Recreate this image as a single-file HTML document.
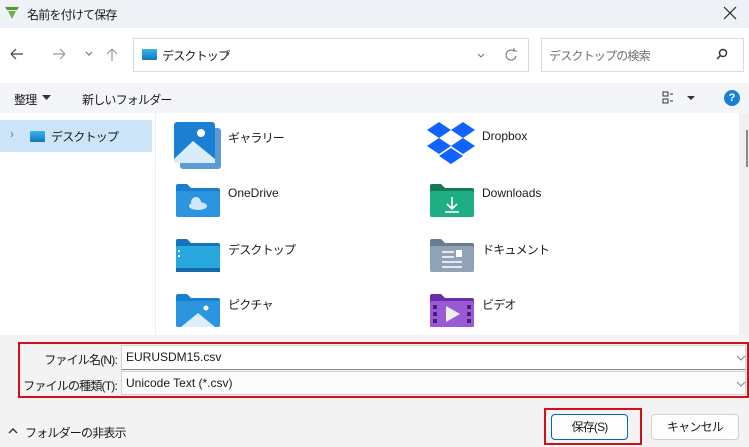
<!DOCTYPE html><html><head><meta charset="utf-8"><style>
*{box-sizing:border-box;margin:0;padding:0}
body{width:749px;height:447px;overflow:hidden;background:#fff;font-family:"Liberation Sans","Noto Sans CJK JP",sans-serif;font-size:12px;color:#1a1a1a;position:relative}
.a{position:absolute}
.t{position:absolute;white-space:nowrap}
.j{letter-spacing:-0.8px}
</style></head><body>
<div class="a" style="left:0;top:0;width:749px;height:28px;background:#eef1f6"></div>
<svg class="a" style="left:4px;top:5px" width="16" height="16"><path d="M1 2h14l-2 3H3z" fill="#4c9a2a"/><path d="M4 6h8l-4 8z" fill="#6ab04c"/></svg>
<div class="t j" style="left:27px;top:6px;font-size:12px">名前を付けて保存</div>
<svg class="a" style="left:723px;top:6px" width="14" height="14"><path d="M1 1L13 13M13 1L1 13" stroke="#222" stroke-width="1.2"/></svg>
<svg class="a" style="left:8px;top:46px" width="110" height="16" fill="none" stroke-width="1.2"><path d="M3 8h12M3 8l5-5M3 8l5 5" stroke="#444"/><path d="M45 8h12M57 8l-5-5M57 8l-5 5" stroke="#999"/><path d="M78 6l3 3 3-3" stroke="#777"/><path d="M104 3v12M104 3l-5 5M104 3l5 5" stroke="#999"/></svg>
<div class="a" style="left:133px;top:38px;width:396px;height:34px;border:1px solid #dcdcdc;background:#fff"></div>
<div class="a" style="left:142px;top:49px;width:15px;height:11px;background:linear-gradient(#3bb4e8,#0e78c2);border-radius:1px"></div>
<div class="t j" style="left:162px;top:47px">デスクトップ</div>
<div class="t" style="left:226px;top:46px;color:#555">›</div>
<svg class="a" style="left:470px;top:47px" width="50" height="16" fill="none" stroke="#777" stroke-width="1.1"><path d="M8 7l3 3 3-3"/><path d="M44 4a5 5 0 1 0 2 5M44 1v3h3"/></svg>
<div class="a" style="left:541px;top:38px;width:203px;height:34px;border:1px solid #dcdcdc;background:#fff"></div>
<div class="t j" style="left:549px;top:47px;color:#6e6e6e">デスクトップの検索</div>
<svg class="a" style="left:715px;top:48px" width="14" height="14" fill="none" stroke="#333" stroke-width="1.5"><circle cx="8" cy="5" r="3.5"/><path d="M5.5 7.5L2 11"/></svg>
<div class="a" style="left:0;top:83px;width:749px;height:30px;background:#f3f5f9"></div>
<div class="t j" style="left:14px;top:91px">整理</div>
<svg class="a" style="left:42px;top:95px" width="9" height="6"><path d="M0 0h9L4.5 5z" fill="#333"/></svg>
<div class="t j" style="left:82px;top:91px">新しいフォルダー</div>
<svg class="a" style="left:662px;top:91px" width="40" height="14" fill="none" stroke="#333"><rect x="1" y="1" width="5" height="4"/><rect x="1" y="8" width="5" height="4"/><path d="M8 3h3M8 10h3"/><path d="M25 5h8l-4 4z" fill="#333" stroke="none"/></svg>
<div class="a" style="left:724px;top:90px;width:16px;height:16px;border-radius:50%;background:#1a7fd8;color:#fff;font-size:11px;font-weight:bold;text-align:center;line-height:16px">?</div>
<div class="a" style="left:0;top:120px;width:152px;height:32px;background:#cce4f7;border-radius:2px"></div>
<div class="t" style="left:10px;top:127px;color:#777">›</div>
<div class="a" style="left:30px;top:131px;width:15px;height:11px;background:linear-gradient(#3bb4e8,#0e78c2);border-radius:1px"></div>
<div class="t j" style="left:51px;top:128px">デスクトップ</div>
<div class="a" style="left:155px;top:113px;width:1px;height:222px;background:#eee"></div>
<div class="a" style="left:739px;top:113px;width:10px;height:222px;background:#f0f0f0"></div>
<div class="a" style="left:746px;top:130px;width:2px;height:37px;background:#888"></div>
<svg class="a" style="left:173px;top:121px" width="50" height="50"><rect x="7" y="7" width="41" height="41" rx="3" fill="#5d9bd6"/><rect x="1" y="1" width="41" height="41" rx="3" fill="#1b80d3"/><circle cx="28" cy="12" r="4" fill="#fff"/><path d="M1 38L20 20l22 18v4H1z" fill="#d9ecf9"/></svg>
<div class="t j" style="left:228px;top:129px">ギャラリー</div>
<svg class="a" style="left:427px;top:122px" width="50" height="46" fill="#0f62fe"><path d="M12 0l12 8-12 8L0 8zM36 0l12 8-12 8-12-8zM12 16l12 8-12 8L0 24zM36 16l12 8-12 8-12-8zM24 26l12 8-12 8-12-8z"/></svg>
<div class="t" style="left:482px;top:129px">Dropbox</div>
<svg class="a" style="left:176px;top:183px" width="44" height="34"><path d="M0 3a2 2 0 0 1 2-2h9l4 4h27a2 2 0 0 1 2 2v25a2 2 0 0 1-2 2H2a2 2 0 0 1-2-2z" fill="#1a7fd1"/><rect x="0" y="8" width="44" height="26" rx="2" fill="#2b95e0"/><ellipse cx="22" cy="23" rx="9" ry="4" fill="#cfe7f8"/><circle cx="20" cy="19" r="5" fill="#cfe7f8"/></svg>
<div class="t" style="left:228px;top:186px">OneDrive</div>
<svg class="a" style="left:430px;top:183px" width="44" height="34"><path d="M0 3a2 2 0 0 1 2-2h9l4 4h27a2 2 0 0 1 2 2v25a2 2 0 0 1-2 2H2a2 2 0 0 1-2-2z" fill="#14785a"/><rect x="0" y="8" width="44" height="26" rx="2" fill="#1fae84"/><path d="M22 14v12M17 21l5 5 5-5M15 29h14" stroke="#fff" stroke-width="1.6" fill="none"/></svg>
<div class="t" style="left:482px;top:186px">Downloads</div>
<svg class="a" style="left:176px;top:238px" width="44" height="34"><path d="M0 3a2 2 0 0 1 2-2h9l4 4h27a2 2 0 0 1 2 2v25a2 2 0 0 1-2 2H2a2 2 0 0 1-2-2z" fill="#1572bd"/><rect x="0" y="8" width="44" height="26" rx="2" fill="#27a7dd"/><rect x="0" y="30" width="44" height="4" fill="#156aa8"/><rect x="2" y="12" width="2" height="2" fill="#fff"/><rect x="2" y="17" width="2" height="2" fill="#fff"/></svg>
<div class="t j" style="left:228px;top:241px">デスクトップ</div>
<svg class="a" style="left:430px;top:238px" width="44" height="34"><path d="M0 3a2 2 0 0 1 2-2h9l4 4h27a2 2 0 0 1 2 2v25a2 2 0 0 1-2 2H2a2 2 0 0 1-2-2z" fill="#6b7c91"/><rect x="0" y="8" width="44" height="26" rx="2" fill="#8fa2b8"/><path d="M12 14h12M12 19h12M12 24h20M12 29h20" stroke="#fff" stroke-width="1.5"/><rect x="26" y="12" width="6" height="7" fill="#fff"/></svg>
<div class="t j" style="left:482px;top:241px">ドキュメント</div>
<svg class="a" style="left:176px;top:293px" width="44" height="34"><path d="M0 3a2 2 0 0 1 2-2h9l4 4h27a2 2 0 0 1 2 2v25a2 2 0 0 1-2 2H2a2 2 0 0 1-2-2z" fill="#1a7fd1"/><rect x="0" y="8" width="44" height="26" rx="2" fill="#2b95e0"/><circle cx="30" cy="15" r="2.5" fill="#fff"/><path d="M5 34l17-14 17 14z" fill="#dbeefa"/></svg>
<div class="t j" style="left:228px;top:296px">ピクチャ</div>
<svg class="a" style="left:430px;top:293px" width="44" height="34"><path d="M0 3a2 2 0 0 1 2-2h9l4 4h27a2 2 0 0 1 2 2v25a2 2 0 0 1-2 2H2a2 2 0 0 1-2-2z" fill="#6a2fa8"/><rect x="0" y="8" width="44" height="26" rx="2" fill="#9a5ad6"/><path d="M16 13v16l14-8z" fill="#eee"/><g fill="#4a1e7a"><rect x="3" y="12" width="4" height="4"/><rect x="3" y="19" width="4" height="4"/><rect x="3" y="26" width="4" height="4"/><rect x="37" y="12" width="4" height="4"/><rect x="37" y="19" width="4" height="4"/><rect x="37" y="26" width="4" height="4"/></g></svg>
<div class="t j" style="left:482px;top:296px">ビデオ</div>
<div class="a" style="left:0;top:335px;width:749px;height:112px;background:#f3f3f3"></div>
<div class="a" style="left:18px;top:342px;width:731px;height:56px;border:2px solid #d0111b"></div>
<div class="t j" style="left:0;top:351px;width:117px;text-align:right">ファイル名(N):</div>
<div class="a" style="left:121px;top:345px;width:625px;height:25px;background:#fff;border:1px solid #d4d4d4;border-bottom:1px solid #888"></div>
<div class="t" style="left:126px;top:350px">EURUSDM15.csv</div>
<div class="t j" style="left:0;top:377px;width:117px;text-align:right">ファイルの種類(T):</div>
<div class="a" style="left:121px;top:371px;width:625px;height:24px;background:#fbfbfb;border:1px solid #d4d4d4"></div>
<div class="t" style="left:126px;top:376px">Unicode Text (*.csv)</div>
<svg class="a" style="left:736px;top:354px" width="10" height="34" fill="none" stroke="#888"><path d="M1 2l4 4 4-4M1 28l4 4 4-4"/></svg>
<svg class="a" style="left:8px;top:427px" width="10" height="8"><path d="M1 6l4-4 4 4" stroke="#333" stroke-width="1.4" fill="none"/></svg>
<div class="t j" style="left:25px;top:424px">フォルダーの非表示</div>
<div class="a" style="left:544px;top:408px;width:98px;height:37px;border:2px solid #d0111b"></div>
<div class="a j" style="left:551px;top:414px;width:77px;height:26px;background:#fdfdfd;border:1px solid #0067c0;border-radius:4px;text-align:center;line-height:24px">保存(S)</div>
<div class="a j" style="left:651px;top:414px;width:88px;height:26px;background:#fdfdfd;border:1px solid #d0d0d0;border-radius:4px;text-align:center;line-height:24px">キャンセル</div>
</body></html>
